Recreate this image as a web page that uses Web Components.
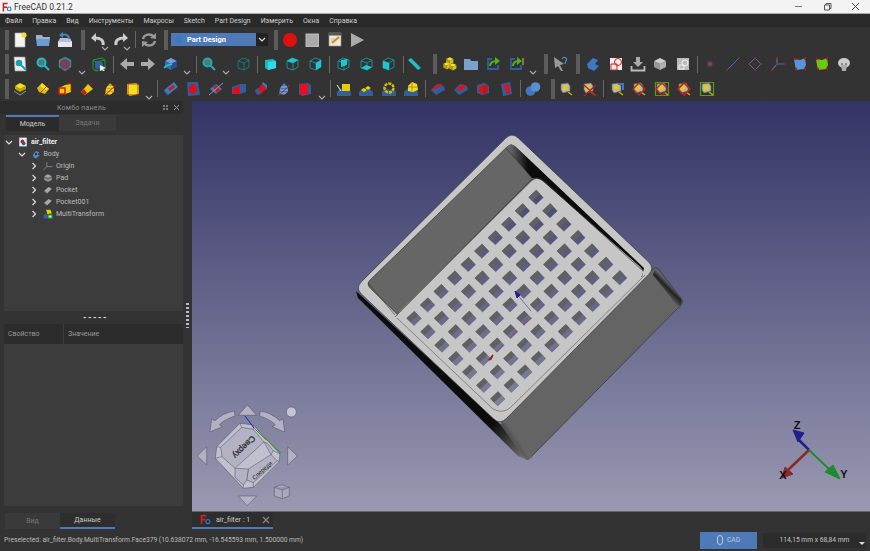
<!DOCTYPE html>
<html lang="ru">
<head>
<meta charset="utf-8">
<title>FreeCAD 0.21.2</title>
<style>
  html, body { margin: 0; height: 100%; background: #333; }
  body { font-family: Roboto, "Noto Sans", "Liberation Sans", sans-serif; font-size: 7px; color: #ccc; overflow: hidden; }
</style>
</head>
<body>
<fc-app>
  <fc-titlebar>FreeCAD 0.21.2</fc-titlebar>
  <fc-menubar items="Файл,Правка,Вид,Инструменты,Макросы,Sketch,Part Design,Измерить,Окна,Справка"></fc-menubar>
  <fc-toolbar height="25" items="grip:7 new:20 open:43 save:65 grip:83 undo:98 drop:105 redo:121 drop:127 sep:135 refresh:149 grip:166 combo:171 grip:276 rec:290 stop:312 macro:335 play:357"></fc-toolbar>
  <fc-toolbar height="24" items="grip:7 zoomdoc:20 zoomsel:43 style:65 drop:82 bbox:99 sep:113 back:127 forward:148 sync:171 drop:187 sep:196 zoomview:209 drop:226 iso:243 sep:257 front:270 top:292 right:315 sep:329 rear:343 bottom:366 left:388 sep:403 ruler:414 grip:435 part:449 group:471 link:493 linksub:516 drop:533 grip:546 what:561 grip:578 body:593 sketchnew:616 import:638 clone:660 clone2:683 sep:697 point:710 line:733 plane:755 lcs:778 binder:800 binder2:822 sheep:844"></fc-toolbar>
  <fc-toolbar height="25" items="grip:7 pad:20 rev:43 loft:65 pipe:87 helix:110 box:133 drop:149 sep:157 pocket:171 hole:193 groove:216 subloft:239 subpipe:261 subhelix:284 subbox:305 drop:322 sep:330 mirror:344 linear:366 polar:389 multi:411 sep:425 fillet:438 chamfer:461 draft:483 thick:506 sep:520 bool:533 grip:553 tape:566 tapex:589 sep:603 tapelink:617 tapered:639 tapegr:662 tapere2:684 tapegr2:707"></fc-toolbar>
  <fc-main>
    <fc-sidepanel></fc-sidepanel>
    <fc-viewport></fc-viewport>
  </fc-main>
  <fc-statusbar>Preselected: air_filter.Body.MultiTransform.Face379 (10.638072 mm, -16.545593 mm, 1.500000 mm)</fc-statusbar>
</fc-app>

<script>
/*
 * Icon helpers, everything is drawn on a 16x16 box.
 */
const poly = (pts, fill, stroke) => `<polygon points="${pts}" fill="${fill}"${stroke ? ` stroke="${stroke}" stroke-width=".7"` : ''}/>`
const line = (d, stroke, w = 1) => `<path d="${d}" fill="none" stroke="${stroke}" stroke-width="${w}"/>`
const cube = (t, l, r, s) => poly('8,2 14,5 8,8 2,5', t, s) + poly('2,5 8,8 8,14 2,11', l, s) + poly('8,8 14,5 14,11 8,14', r, s)
const wire = (c) => line('M3 5 8 2 14 4V11L9 14 3 12ZM3 5 9 7 14 4M9 7V14', c, 1)
const cyanFace = (pts) => wire('#1c8d92') + poly(pts, '#1fc6cf')
const mag = (c) => `<circle cx="6.5" cy="6.5" r="4" fill="#8fe" fill-opacity=".35" stroke="${c}" stroke-width="2"/>` + line('M9.5 9.5 14 14', c, 2.2)
const ground = (extra) => poly('1,11 5,7 8,9 12,8 15,11 15,15 1,15', '#33609c') + extra
const tape = (extra = '') => poly('3,3 10,2 12,5 12,10 5,12 3,9', '#b8b8a8', '#666') + poly('5,5 9,4 9,8 5,9', '#e8d000') + line('M10 11 14 14', '#c0b000', 1.5) + extra
const redFrame = line('M8 2 14 8 8 14 2 8Z', '#c02020', 1.3)
const greenFrame = line('M1.5 1.5H14.5V14.5H1.5Z', '#5a9a10', 1.2)
const dots = '<circle cx="2" cy="14" r="1.1" fill="#b01818"/><circle cx="14" cy="2" r="1.1" fill="#b01818"/>'
const corners = '<circle cx="3" cy="3" r="1.2" fill="#c01818"/><circle cx="13" cy="2.500" r="1.2" fill="#c01818"/><circle cx="13" cy="13" r="1.2" fill="#c01818"/><circle cx="4" cy="13" r="1.2" fill="#c01818"/>'
const block = (x, y) => `<g transform="translate(${x} ${y}) scale(.6)">${cube('#f4e030', '#b89c10', '#d8c020')}</g>`

const ICONS = {
  new: poly('3,1 13,1 13,15 3,15', '#f4f4ee', '#aaa') + '<circle cx="12" cy="3" r="2.600" fill="#f2e030"/>',
  open: poly('1,3 7,3 8,5 15,5 15,8 1,8', '#9db0c8') + poly('1,7 15,7 14,14 2,14', '#6b9bd8'),
  save: poly('1,9 4,9 12,9 15,9 15,15 1,15', '#e6e6ee') + poly('3,6 13,6 15,10 1,10', '#b8c0d0') + line('M12 7C12 3 8 2 5 3', '#3f86c8', 2) + poly('6,0 2,3 6,6', '#3f86c8'),
  undo: line('M13 13C14 8 10 6 5 6', '#ccc', 3) + poly('6,1 1,6 6,10', '#ccc'),
  redo: line('M3 13C2 8 6 6 11 6', '#ccc', 3) + poly('10,1 15,6 10,10', '#ccc'),
  refresh: line('M2 7C3 2 10 1 13 5', '#999', 2.4) + poly('15,1 15,7 9,6', '#999') + line('M14 9C13 14 6 15 3 11', '#999', 2.4) + poly('1,15 1,9 7,10', '#999'),
  rec: '<circle cx="8" cy="8" r="7" fill="#e01010"/>',
  stop: '<rect x="2" y="2" width="12.500" height="12.500" fill="#aaa" stroke="#bbb"/>',
  macro: poly('2,1 14,1 14,14 2,14', '#f0ead8', '#999') + poly('2,1 14,1 14,3.500 2,3.500', '#555') + line('M5 11 12 5', '#d88020', 2) + line('M4 7H8M4 9H7', '#aaa', .8),
  play: poly('2,1 15,8 2,15', '#aaa'),
  zoomdoc: poly('2,1 13,1 14,15 3,15', '#eee', '#999') + '<circle cx="7" cy="7" r="3.300" fill="#1b9fb0"/>' + line('M9 9 14 14', '#1b9fb0', 2),
  zoomsel: mag('#20b8c4'),
  style: poly('8,1 14,4 14,11 8,15 2,11 2,4', '#1aa6b4', '#0c7f8a') + '<circle cx="8" cy="8" r="4.500" fill="#2a5a90" stroke="#d02020" stroke-width="1.400"/>' + line('M5 5 11 11', '#d02020', 1.400),
  bbox: line('M2 4 11 2 14 4V13L5 15 2 13ZM2 4 5 6 14 4M5 6V15', '#1b9a30', 1) + '<circle cx="8" cy="9" r="4" fill="#2f60a8"/>' + poly('9,9 15,12 12,13 14,15 12,15 11,14 9,15', '#eee'),
  back: poly('1,8 8,2 8,6 15,6 15,10 8,10 8,14', '#aaa'),
  forward: poly('15,8 8,2 8,6 1,6 1,10 8,10 8,14', '#aaa'),
  sync: cube('#6d9ee0', '#3a6ab0', '#2a5090') + line('M1 12C3 9 6 9 9 8', '#2cc', 1.600),
  zoomview: mag('#20a8b4'),
  iso: wire('#137a80'),
  front: poly('3,4 11,3 14,5 14,12 6,14 3,12', '#19b8c2') + poly('6,6 14,5 14,12 6,14', '#30dbe4'),
  top: cyanFace('3,5 8,2 14,4 9,7'),
  right: cyanFace('9,7 14,4 14,11 9,14'),
  rear: cyanFace('6,4 12,3 12,9 6,11'),
  bottom: cyanFace('3,12 9,14 14,11 8,9'),
  left: cyanFace('3,5 9,7 9,14 3,12'),
  ruler: poly('2,4 5,2 15,12 12,14', '#20c0c8'),
  part: block(4, 0) + block(1, 5) + block(7, 6),
  group: poly('1,3 7,3 8,5 15,5 15,14 1,14', '#7aa0cc'),
  link: line('M7 3H3V13H13V9', '#2e5f9c', 1.800) + line('M5 10C5 6 8 5 12 5', '#50b020', 2) + poly('10,1 15,5 10,9', '#50b020'),
  linksub: line('M7 3H3V13H13V9', '#2e5f9c', 1.800) + line('M5 10C5 6 8 5 11 5', '#50b020', 2) + poly('9,1 14,5 9,9', '#50b020') + line('M15 2V9', '#ddc020', 1),
  what: poly('1,1 11,8 7,9 10,15 8,15 5,10 2,12', '#999') + line('M9 3C11 0 15 2 13 5 12 6 12 7 12 8', '#4f88c4', 1.300),
  body: poly('2,8 8,2 13,4 10,8 14,10 9,15 3,12', '#3f78c0'),
  sketchnew: poly('2,2 14,2 14,14 2,14', '#eee') + '<circle cx="10" cy="6" r="3.500" fill="none" stroke="#d02020"/>' + line('M3 8H9V14H3Z', '#d02020', 1),
  import: poly('6,1 10,1 10,6 13,6 8,11 3,6 6,6', '#aaa') + line('M1.500 10V14.500H14.500V10', '#bbb', 1.800),
  clone: cube('#ccc', '#999', '#b0b0b0'),
  clone2: poly('2,2 14,2 14,14 2,14', '#bbb') + '<circle cx="10" cy="7" r="3" fill="none" stroke="#eee"/>' + line('M4 9H9V13H4Z', '#eee', 1),
  point: '<circle cx="8" cy="8" r="2.400" fill="#2f5f9f" stroke="#b01818"/>',
  line: line('M2 14 14 2', '#3f78c0', 1) + dots,
  plane: line('M2 8 8 2 14 8 8 14Z', '#3f78c0', 1) + '<circle cx="2" cy="8" r="1.100" fill="#c01818"/><circle cx="8" cy="2" r="1.100" fill="#c01818"/><circle cx="14" cy="8" r="1.100" fill="#c01818"/><circle cx="8" cy="14" r="1.100" fill="#c01818"/>',
  lcs: line('M7 8V2M7 8 14 8M7 8 2 14', '#3f78c0', 1.100) + '<circle cx="7" cy="2" r="1.100" fill="#c01818"/><circle cx="14" cy="8" r="1.100" fill="#c01818"/><circle cx="2" cy="14" r="1.100" fill="#c01818"/><circle cx="7" cy="8" r="1" fill="#c01818"/>',
  binder: poly('2,3 8,4 13,2 14,9 12,13 4,14 3,9', '#5a94d8') + corners,
  binder2: poly('2,3 8,4 13,2 14,9 12,13 4,14 3,9', '#6cc810') + corners,
  sheep: '<ellipse cx="8" cy="7" rx="6" ry="5" fill="#ccc"/>' + poly('5,9 11,9 10,15 6,15', '#aaa') + '<circle cx="6" cy="8" r=".8" fill="#333"/><circle cx="10" cy="8" r=".8" fill="#333"/>',
  pad: poly('3,5 8,2 14,5 8,8', '#f2e020') + poly('3,5 8,8 14,5 14,8 8,11 3,8', '#c0a800') + line('M2 10 8 14 14 10', '#999', 1),
  rev: poly('2,7 7,2 14,8 10,13 4,11', '#d8bc10') + poly('7,2 14,8 10,9 5,5', '#f2e020') + line('M3 14 14 3', '#b02020', .8),
  loft: poly('2,7 8,4 14,3 14,11 8,13 2,13', '#e8d010') + line('M2 7H8V13H2Z', '#d01818', 1.500) + line('M10 3 14 2V10', '#d01818', .8),
  pipe: poly('2,11 9,3 14,8 6,14', '#e8c810') + poly('2,11 5,8 8,12 6,14', '#d01818') + line('M11 4 14 1', '#b02020', 1),
  helix: poly('3,13 4,7 8,2 12,6 12,11 8,14', '#caa810') + line('M5 6H11M4 9H12M4 12H10', '#f2e020', 1.300) + line('M2 15 14 4', '#c02020', 1),
  box: poly('2,3 11,2 14,4 14,13 5,15 2,13', '#f2e020') + line('M3 3H13V14H3Z', '#b02020', .8),
  pocket: poly('1,9 11,1 15,6 5,14', '#3f78c0') + poly('5,8 10,4 12,6 7,10', '#d01818') + poly('1,9 5,14 5,15 1,11', '#27548f'),
  hole: poly('2,1 13,1 15,14 3,15', '#2e5f9c') + '<ellipse cx="8" cy="8" rx="4" ry="5" fill="#d81020"/>',
  groove: poly('2,8 8,3 14,8 8,13', '#3f78c0') + poly('5,6 8,4 12,9 9,12', '#d01818') + line('M1 14 15 2', '#a8b0c0', .8),
  subloft: poly('1,6 9,3 15,3 15,11 9,13 1,13', '#2e5f9c') + poly('2,7 9,5 9,13 2,13', '#d81020'),
  subpipe: poly('2,11 9,3 14,8 6,14', '#d81020') + poly('9,3 14,8 14,4 10,1', '#3f78c0') + poly('2,9 5,7 8,12 4,14', '#2e5f9c'),
  subhelix: poly('3,13 4,7 8,2 12,6 12,11 8,14', '#3f78c0') + line('M5 6H11M4 9H12M4 12H10', '#9bc', 1) + line('M2 15 14 4', '#c02020', 1),
  subbox: poly('2,3 11,2 14,4 14,13 5,15 2,13', '#2e5f9c') + poly('3,3 11,3 11,13 3,14', '#e81020'),
  mirror: ground(poly('6,3 14,3 14,10 6,10', '#e8d000')) + line('M1 4 5 10', '#eee', 1),
  linear: ground(poly('3,9 6,7 9,9 6,11', '#e8d000') + poly('7,7 10,5 13,7 10,9', '#e8d000')),
  polar: ground('<circle cx="8" cy="7" r="4.500" fill="none" stroke="#d8c000" stroke-width="2.400" stroke-dasharray="3 1"/>'),
  multi: ground(poly('5,5 9,1 14,3 15,9 10,11 5,10', '#f0dc20') + line('M5 6H15M9 2V10', '#a08800', .8)),
  fillet: poly('1,9 7,3 14,5 15,9 6,14', '#2e5f9c') + poly('1,9 8,3 13,3 6,8', '#e01020'),
  chamfer: poly('1,9 7,3 14,5 15,9 6,14', '#2e5f9c') + poly('3,9 9,3 14,5 7,10', '#e01020'),
  draft: poly('2,4 9,2 14,5 14,12 7,14 2,12', '#2e5f9c') + poly('4,5 8,4 8,13 4,12', '#d01818') + poly('8,4 13,5 13,11 8,13', '#c01420'),
  thick: poly('3,3 12,1 14,13 5,15', '#2e5f9c') + poly('5,4 11,3 12,12 9,13', '#e01020'),
  bool: '<circle cx="5.500" cy="10" r="4.800" fill="#3f78c0"/><circle cx="10.500" cy="6" r="4.800" fill="#5a8ed0"/>',
  tape: tape(),
  tapex: tape(line('M3 15 15 4M3 4 15 15', '#c01818', 1.300)),
  tapelink: tape(line('M9 3H14V9', '#3f78c0', 2)),
  tapered: tape(redFrame),
  tapegr: tape(greenFrame + redFrame),
  tapere2: tape(line('M2 8 8 2 14 8 8 14Z', '#c02020', 1.600)),
  tapegr2: tape(greenFrame),
  freecad: poly('1,1 9,1 9,3.500 3.500,3.500 3.500,7 8,7 8,9.500 3.500,9.500 3.500,15 1,15', '#d02020') + '<circle cx="11.500" cy="11" r="3" fill="none" stroke="#2f6fd0" stroke-width="1.800"/>',
  doc: poly('2,1 14,1 14,15 2,15', '#eee') + '<circle cx="7" cy="7" r="3" fill="#c02020"/><circle cx="9" cy="10" r="3" fill="#2a5a9a"/>',
  gear: poly('3,9 8,3 13,5 11,9 14,10 8,15 4,13', '#4f88c8') + '<circle cx="8" cy="8" r="2" fill="#333"/>',
  axes: line('M6 9V2M6 9 15 9M6 9 1 14', '#aaa', 1),
  padt: poly('2,5 8,2 14,5 8,8', '#aaa') + poly('2,5 8,8 14,5 14,8 8,11 2,8', '#777') + poly('2,8 8,11 14,8 14,11 8,14 2,11', '#999'),
  pockt: poly('2,9 9,3 14,6 7,13', '#aaa') + poly('2,9 7,13 7,14 2,11', '#777'),
  multit: poly('1,10 5,7 8,9 8,15 1,15', '#33609c') + poly('5,1 12,1 14,7 7,8', '#e8d000') + poly('8,9 15,9 15,15 8,15', '#30c030') + line('M11.500 10V14M9.500 12H13.500', '#fff', 1.200)
}

/**
 * One 16x16 toolbar or tree icon.
 */
customElements.define('fc-icon',
  class extends HTMLElement {
    constructor () {
      super()
      const size = this.getAttribute('size') || 16
      this.attachShadow({ mode: 'open' }).innerHTML = `
        <style>:host { display: block; width: ${size}px; height: ${size}px; } svg { display: block; }</style>
        <svg width="${size}" height="${size}" viewBox="0 0 16 16">${ICONS[this.getAttribute('name')] || ''}</svg>`
    }
  }
)

customElements.define('fc-app',
  class extends HTMLElement {
    constructor () {
      super()
      this.attachShadow({ mode: 'open' }).innerHTML = `
        <style>
          :host { display: flex; flex-direction: column; width: 870px; height: 551px; background: #333; overflow: hidden; }
        </style>
        <slot></slot>`
    }
  }
)

customElements.define('fc-titlebar',
  class extends HTMLElement {
    constructor () {
      super()
      this.attachShadow({ mode: 'open' }).innerHTML = `
        <style>
          :host { display: flex; align-items: center; height: 13px; flex: none; background: #f3f3f3; border-bottom: 1px solid #aaa; color: #333; font-size: 8.500px; }
          fc-icon { margin: 0 2px 0 2px; }
          .title { flex: 1; }
          .btns { display: flex; }
          .btn { width: 28.500px; height: 13px; display: flex; align-items: center; justify-content: center; }
        </style>
        <fc-icon name="freecad" size="10"></fc-icon>
        <span class="title"><slot></slot></span>
        <span class="btns">
          <span class="btn"><svg width="9" height="9"><path d="M1 4.500H8" stroke="#777"/></svg></span>
          <span class="btn"><svg width="9" height="9"><path d="M1.500 3H6.500V8H1.500ZM3 3V1.500H8V6.500H6.500" fill="none" stroke="#555"/></svg></span>
          <span class="btn"><svg width="9" height="9"><path d="M1 1 8 8M8 1 1 8" stroke="#444"/></svg></span>
        </span>`
    }
  }
)

customElements.define('fc-menubar',
  class extends HTMLElement {
    constructor () {
      super()
      const items = this.getAttribute('items').split(',').map(i => `<span>${i}</span>`).join('')
      this.attachShadow({ mode: 'open' }).innerHTML = `
        <style>
          :host { display: flex; align-items: center; gap: 10px; height: 13px; flex: none; padding-left: 5px; background: #2a2a2a; color: #cfcfcf; font-size: 6.950px; white-space: nowrap; }
        </style>${items}`
    }
  }
)

/**
 * Toolbar row. The items attribute holds name:centreX tokens, from which the
 * gaps between the buttons are worked out.
 */
customElements.define('fc-toolbar',
  class extends HTMLElement {
    constructor () {
      super()
      let html = ''
      let right = 0
      const widths = { grip: 4, sep: 1, drop: 8, combo: 97 }
      for (const token of this.getAttribute('items').split(' ')) {
        const [name, at] = token.split(':')
        const w = widths[name] || 16
        const left = name === 'combo' ? Number(at) : Number(at) - w / 2
        const gap = `margin-left:${left - right}px`
        right = left + w
        if (name === 'grip') html += `<i class="grip" style="${gap}"></i>`
        else if (name === 'sep') html += `<i class="sep" style="${gap}"></i>`
        else if (name === 'drop') html += `<svg class="drop" style="${gap}" width="8" height="5"><path d="M1 1 4 4 7 1" fill="none" stroke="#aaa" stroke-width="1.200"/></svg>`
        else if (name === 'combo') html += `<fc-combo style="${gap}">Part Design</fc-combo>`
        else html += `<fc-icon name="${name}" style="${gap}"></fc-icon>`
      }
      this.attachShadow({ mode: 'open' }).innerHTML = `
        <style>
          :host { display: flex; align-items: center; height: ${this.getAttribute('height')}px; flex: none; background: #333; }
          .grip { width: 4px; height: 20px; background-image: radial-gradient(#5c5c5c .8px, transparent 1px); background-size: 2px 2px; }
          .sep { width: 1px; height: 17px; background: #666; }
          .drop { margin-top: 17px; }
          fc-icon, fc-combo { flex: none; }
        </style>${html}`
    }
  }
)

customElements.define('fc-combo',
  class extends HTMLElement {
    constructor () {
      super()
      this.attachShadow({ mode: 'open' }).innerHTML = `
        <style>
          :host { display: flex; width: 97px; height: 13px; }
          .value { display: flex; align-items: center; gap: 3px; width: 85px; padding-left: 2px; box-sizing: border-box; background: #4f7ab8; color: #fff; font-weight: 700; font-size: 7.400px; }
          .arrow { display: flex; align-items: center; justify-content: center; width: 12px; background: #232323; }
        </style>
        <span class="value"><fc-icon name="body" size="11"></fc-icon><slot></slot></span>
        <span class="arrow"><svg width="8" height="5"><path d="M1 1 4 4 7 1" fill="none" stroke="#ddd" stroke-width="1.200"/></svg></span>`
    }
  }
)

customElements.define('fc-main',
  class extends HTMLElement {
    constructor () {
      super()
      this.attachShadow({ mode: 'open' }).innerHTML = `
        <style>:host { display: flex; flex: 1; min-height: 0; }</style>
        <slot></slot>`
    }
  }
)

/**
 * A line of the model tree.
 */
customElements.define('fc-tree-item',
  class extends HTMLElement {
    constructor () {
      super()
      const depth = Number(this.getAttribute('depth'))
      const open = this.hasAttribute('open')
      const arrow = open ? 'M1 3 4 6 7 3' : 'M2.500 1 5.500 4 2.500 7'
      this.attachShadow({ mode: 'open' }).innerHTML = `
        <style>
          :host { display: flex; align-items: center; height: 12px; padding-left: ${1 + depth * 12.500}px; color: #bdbdbd; font-size: 7px; white-space: nowrap; }
          :host([bold]) { color: #eee; font-weight: 700; }
          svg { flex: none; margin-right: 5px; }
          fc-icon { margin-right: 3px; flex: none; }
        </style>
        <svg width="8" height="8"><path d="${arrow}" fill="none" stroke="#ddd" stroke-width="1.200"/></svg>
        <fc-icon name="${this.getAttribute('icon')}" size="10"></fc-icon>
        <slot></slot>`
    }
  }
)

customElements.define('fc-sidepanel',
  class extends HTMLElement {
    constructor () {
      super()
      this.attachShadow({ mode: 'open' }).innerHTML = `
        <style>
          :host { display: flex; flex: none; width: 192px; background: #333; font-size: 7px; }
          .col { display: flex; flex-direction: column; width: 183px; }
          .head { display: flex; align-items: center; justify-content: center; height: 13px; padding-right: 20px; background: #2c2c2c; color: #8e8e8e; position: relative; letter-spacing: .2px; }
          .head svg { position: absolute; right: 3px; top: 3px; }
          .tabs { display: flex; height: 16px; margin: 1px 0 0 6px; }
          .tab { display: flex; align-items: center; justify-content: center; box-sizing: border-box; color: #777; }
          .tabs .tab:first-child { width: 53px; background: #2b2b2b; color: #ccc; border-top: 2px solid #4f7ab8; }
          .tabs .tab:last-child { width: 57px; background: #3a3a3a; }
          .tree { height: 176px; margin: 4px 0 0 4px; box-sizing: border-box; background: #3c3c3c; }
          .tree fc-tree-item:first-child { margin-top: 1px; }
          .split { display: flex; align-items: center; justify-content: center; height: 13px; padding-left: 8px; color: #ddd; font-size: 9px; font-weight: 700; line-height: 1; letter-spacing: 1.500px; }
          .props { display: flex; height: 20px; margin-left: 4px; background: #2c2c2c; color: #999; align-items: center; }
          .props span:first-child { width: 60px; padding-left: 4px; box-sizing: border-box; border-right: 1px solid #3c3c3c; line-height: 20px; }
          .props span:last-child { padding-left: 4px; }
          .body { height: 162px; margin-left: 4px; background: #3c3c3c; }
          .tabs2 { display: flex; height: 16px; margin: 7px 0 0 5px; }
          .tabs2 .tab:first-child { width: 55px; background: #3a3a3a; }
          .tabs2 .tab:last-child { width: 55px; background: #2e2e2e; color: #ccc; border-bottom: 2px solid #4f7ab8; }
          .handle { display: flex; flex: 1; justify-content: center; }
          .handle i { width: 3px; height: 25px; margin-top: 202px; background-image: linear-gradient(#bbb 2px, transparent 2px); background-size: 3px 4px; }
        </style>
        <div class="col">
          <div class="head">Комбо панель
            <svg width="18" height="7"><path d="M1 1H3V3H1ZM4 1H6V3H4ZM1 4H3V6H1ZM4 4H6V6H4Z" fill="#777"/><path d="M12 1 17 6M17 1 12 6" stroke="#999"/></svg>
          </div>
          <div class="tabs"><div class="tab">Модель</div><div class="tab">Задачи</div></div>
          <div class="tree">
            <fc-tree-item depth="0" icon="doc" open bold>air_filter</fc-tree-item>
            <fc-tree-item depth="1" icon="gear" open>Body</fc-tree-item>
            <fc-tree-item depth="2" icon="axes">Origin</fc-tree-item>
            <fc-tree-item depth="2" icon="padt">Pad</fc-tree-item>
            <fc-tree-item depth="2" icon="pockt">Pocket</fc-tree-item>
            <fc-tree-item depth="2" icon="pockt">Pocket001</fc-tree-item>
            <fc-tree-item depth="2" icon="multit">MultiTransform</fc-tree-item>
          </div>
          <div class="split">-----</div>
          <div class="props"><span>Свойство</span><span>Значение</span></div>
          <div class="body"></div>
          <div class="tabs2"><div class="tab">Вид</div><div class="tab">Данные</div></div>
        </div>
        <div class="handle"><i></i></div>`
    }
  }
)

/*
 * Builds the rounded outline of a polygon, used for the filter's rim.
 */
const rounded = (pts, r) => {
  let d = ''
  pts.forEach((p, i) => {
    const a = pts[(i + pts.length - 1) % pts.length]
    const b = pts[(i + 1) % pts.length]
    const la = Math.hypot(a[0] - p[0], a[1] - p[1])
    const lb = Math.hypot(b[0] - p[0], b[1] - p[1])
    const s = [p[0] + (a[0] - p[0]) * r / la, p[1] + (a[1] - p[1]) * r / la]
    const e = [p[0] + (b[0] - p[0]) * r / lb, p[1] + (b[1] - p[1]) * r / lb]
    d += `${i ? 'L' : 'M'}${s[0].toFixed(1)} ${s[1].toFixed(1)}Q${p[0]} ${p[1]} ${e[0].toFixed(1)} ${e[1].toFixed(1)}`
  })
  return d + 'Z'
}

/*
 * The grille: 7 x 10 square openings, each one showing the wall and the background.
 */
const grille = () => {
  let out = ''
  for (let i = 0; i < 7; i++) {
    for (let j = 0; j < 10; j++) {
      const x = 536 + i * 13.95 - j * 13.55
      const y = 197.3 + i * 13.4 + j * 13.45
      const top = `${x + 0.3} ${y - 7.2}`
      const left = `${x - 7.4} ${y}`
      out += `<path d="M${top}L${x + 7.3} ${y + 0.2}L${x} ${y + 7.2}L${left}Z" fill="url(#bg)" stroke="#555" stroke-width=".4"/>`
      out += `<path d="M${top}L${x + 3.9} ${y - 3.4}L${x - 3.6} ${y + 3.7}L${left}Z" fill="#606060"/>`
    }
  }
  return out
}

const navCube = `
  <g transform="translate(190 400) scale(.3333)" stroke="#4a4a5a" stroke-width="1.500" fill="#b2b2c4" stroke-linejoin="round">
    <path d="M145 46 172 15 200 46Z"/>
    <path d="M50 140 22 168 50 195Z"/>
    <path d="M293 140 322 168 293 195Z"/>
    <path d="M145 288 200 288 172 317Z"/>
    <path d="M133 33C110 37 90 47 75 62L65 57 60 96 97 80 88 74C100 62 118 53 135 48Z"/>
    <path d="M211 33C234 37 254 47 269 62L279 57 284 96 247 80 256 74C244 62 226 53 209 48Z"/>
    <circle cx="304" cy="36" r="15" fill="#c4c4d2"/>
    <path d="M253 262 275 254 298 262 298 288 277 296 253 288ZM253 262 277 270 298 262M277 270V296" fill="#a8a8be"/>
    <path d="M150 70 190 75 270 162 267 185 190 262 160 265 76 175 80 140Z" fill="#c0c0ce"/>
    <path d="M92 142 155 82 190 88 222 126 135 205 96 170Z"/>
    <path d="M232 130 250 152 243 164 222 126ZM175 207 243 164 262 182 190 248 170 240Z"/>
    <path d="M135 205 175 207 170 240 160 255 135 232 135 205Z"/>
    <path d="M92 142 80 140M96 170 76 175M155 82 150 70M190 88 190 75M250 152 270 162M262 182 267 185M190 248 190 262M160 255 160 265" fill="none"/>
  </g>
  <path d="M245 416 254 428" stroke="#2020d0" stroke-width="1"/>
  <path d="M254 428 266 440" stroke="#d06060" stroke-width="1"/>
  <path d="M256 430 281 453" stroke="#20a020" stroke-width="1"/>
  <text transform="translate(242 445) rotate(135)" text-anchor="middle" font-size="8.500" font-family="Liberation Sans, sans-serif" fill="#222" stroke="#222" stroke-width=".2">Сверху</text>
  <text transform="translate(263.500 472) rotate(-42)" text-anchor="middle" font-size="6" font-family="Liberation Sans, sans-serif" fill="#222">Спереди</text>`

const axes = `
  <path d="M809 450 799 440" stroke="#20208c" stroke-width="2.500"/>
  <path d="M793 430 804 433 798 442Z" fill="#20208c" stroke="#20208c" stroke-width="1"/>
  <path d="M809 450 788 470" stroke="#8c2828" stroke-width="2.500"/>
  <path d="M782 478 785 467 793 474Z" fill="#8c2828" stroke="#8c2828"/>
  <path d="M809 450 830 470" stroke="#1c8c28" stroke-width="1.800"/>
  <path d="M840 479 825 472 833 465Z" fill="#1c8c28" stroke="#1c8c28"/>
  <g font-family="Liberation Sans, sans-serif" font-size="11" font-weight="700" fill="#111" text-anchor="middle">
    <text x="797" y="429">Z</text>
    <text x="783" y="479">X</text>
    <text x="844" y="478">Y</text>
  </g>`

customElements.define('fc-viewport',
  class extends HTMLElement {
    constructor () {
      super()
      const rim = [[512, 132], [655, 268], [500, 425], [355, 288]]
      const opening = [[511, 143], [644, 270], [500, 414], [366, 284]]
      const plate = [[537, 176], [646, 272], [500, 422], [394, 317]]
      this.attachShadow({ mode: 'open' }).innerHTML = `
        <style>
          :host { display: flex; flex-direction: column; flex: 1; min-width: 0; font-size: 7px; }
          svg { display: block; flex: none; }
          .bar { display: flex; flex: 1; align-items: stretch; background: #333; border-top: 1px solid #666; }
          .tab { display: flex; align-items: center; gap: 5px; width: 81px; box-sizing: border-box; padding: 0 3px 0 8px; background: #2e2e2e; color: #ccc; border-bottom: 2px solid #4f7ab8; white-space: nowrap; }
          .tab span { flex: 1; }
        </style>
        <svg width="678" height="410" viewBox="192 101 678 410">
          <defs>
            <linearGradient id="bg" gradientUnits="userSpaceOnUse" x1="0" y1="101" x2="0" y2="511">
              <stop offset="0" stop-color="#333366"/><stop offset="1" stop-color="#9999b2"/>
            </linearGradient>
            <linearGradient id="shade" gradientUnits="userSpaceOnUse" x1="510" y1="160" x2="528" y2="160">
              <stop offset="0" stop-color="#666"/><stop offset="1" stop-color="#0c0c0c"/>
            </linearGradient>
            <linearGradient id="cornerR" gradientUnits="userSpaceOnUse" x1="664" y1="294" x2="673" y2="285">
              <stop offset="0" stop-color="#666"/><stop offset=".55" stop-color="#222"/><stop offset="1" stop-color="#777"/>
            </linearGradient>
            <linearGradient id="cornerB" gradientUnits="userSpaceOnUse" x1="490" y1="445" x2="525" y2="425">
              <stop offset="0" stop-color="#111"/><stop offset=".7" stop-color="#666"/>
            </linearGradient>
            <linearGradient id="left" gradientUnits="userSpaceOnUse" x1="440" y1="370" x2="528" y2="460">
              <stop offset=".6" stop-color="#0c0c0c"/><stop offset="1" stop-color="#777"/>
            </linearGradient>
          </defs>
          <rect x="192" y="101" width="678" height="410" fill="url(#bg)"/>
          <path d="${rounded([[500, 420], [656, 266], [684, 302], [527, 461]], 4)}" fill="#646464" stroke="#333" stroke-width=".7"/>
          <path d="M655 268 682 299 680 309 653 275Z" fill="url(#cornerR)"/>
          <path d="M500 424 505 423 533 457 527 460Z" fill="url(#cornerB)"/>
          <path d="M356 291 500 424 527 460 518 456 358 298Z" fill="url(#left)"/>
          <path d="${rounded(rim, 9)}" fill="#c6c6c6" stroke="#333" stroke-width=".7"/>
          <path d="${rounded(opening, 6)}" fill="#666" stroke="#333" stroke-width=".7"/>
          <path d="M506 148 511 144 515 146 644 268 642 277 537 178 532 178Z" fill="url(#shade)"/>
          <path d="M506 148 532 178M368 283 395 315" stroke="#333" stroke-width=".6" fill="none"/>
          <path d="${rounded(plate, 8)}" fill="#c6c6c6"/>
          <path d="M395 317 530 181Q537 175 544 181L643 271" fill="none" stroke="#333" stroke-width=".7"/>
          <path d="M397 318 493 409Q502 414 510 408L645 275" fill="none" stroke="#555" stroke-width=".6"/>
          ${grille()}
          <path d="M516 293 531 311" stroke="#5555b8" stroke-width=".8"/>
          <path d="M515 291 520 295 517 298Z" fill="#1a1a90" stroke="#1a1a90"/>
          <path d="M531.700 318 523 325M516.700 331.700 510 338M503 345 497 352" stroke="#a04868" stroke-width="1"/>
          <path d="M489 360 493 355 491 359Z" fill="#a01818" stroke="#a01818" stroke-width="1.500"/>
          ${navCube}
          ${axes}
        </svg>
        <div class="bar">
          <div class="tab"><fc-icon name="freecad" size="11"></fc-icon><span>air_filter : 1</span>
            <svg width="8" height="8"><path d="M1 1 7 7M7 1 1 7" stroke="#888" stroke-width="1.200"/></svg>
          </div>
        </div>`
    }
  }
)

customElements.define('fc-statusbar',
  class extends HTMLElement {
    constructor () {
      super()
      this.attachShadow({ mode: 'open' }).innerHTML = `
        <style>
          :host { display: flex; align-items: center; height: 22px; flex: none; padding: 0 4px; background: #333; color: #bbb; font-size: 6.700px; white-space: nowrap; }
          .msg { flex: 1; }
          .cad { display: flex; align-items: center; justify-content: center; gap: 4px; width: 57px; height: 17px; background: #4f7ab8; color: #b9cbe4; }
          .dim { display: flex; align-items: center; justify-content: center; position: relative; width: 103px; height: 15px; margin-left: 6px; background: #2c2c2c; color: #c4c4c4; }
          .dim svg { position: absolute; right: 1px; bottom: 2px; }
        </style>
        <span class="msg"><slot></slot></span>
        <span class="cad"><svg width="6" height="10"><rect x=".5" y=".5" width="5" height="9" rx="2.500" fill="none" stroke="#b9cbe4"/></svg>CAD</span>
        <span class="dim">114,15 mm x 68,84 mm<svg width="6" height="4"><path d="M0 0H6L3 3Z" fill="#ddd"/></svg></span>`
    }
  }
)
</script>
</body>
</html>
